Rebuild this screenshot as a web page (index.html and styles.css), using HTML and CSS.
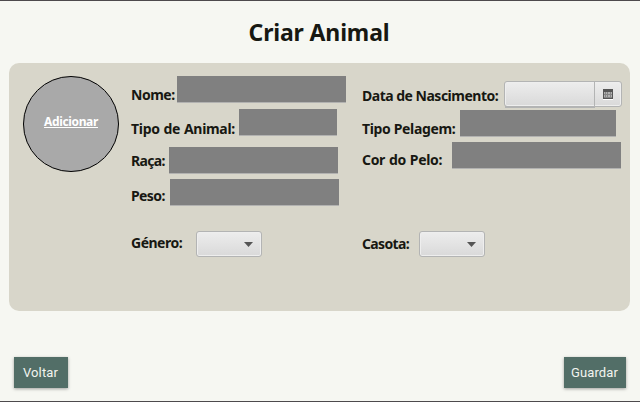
FILE: index.html
```html
<!DOCTYPE html>
<html lang="pt">
<head>
<meta charset="utf-8">
<title>Criar Animal</title>
<link rel="stylesheet" href="styles.css">
</head>
<body>
<h1 class="title"><span>Criar Animal</span></h1>
<main class="panel">
  <div class="photo"><a class="photo-link">Adicionar</a></div>
  <div class="column left">
    <div class="row nome"><label>Nome:</label><div class="field"></div></div>
    <div class="row tipo"><label>Tipo de Animal:</label><div class="field"></div></div>
    <div class="row raca"><label>Raça:</label><div class="field"></div></div>
    <div class="row peso"><label>Peso:</label><div class="field"></div></div>
    <div class="row genero"><label>Género:</label><div class="combo"><i class="arrow"></i></div></div>
  </div>
  <div class="column right">
    <div class="row data"><label>Data de Nascimento:</label>
      <div class="date"><div class="date-text"></div><div class="date-button">
        <svg width="10" height="11" viewBox="0 0 10 11" shape-rendering="crispEdges"><path fill="#fff" d="M0 10h10v1H0z"/><path fill="#555" d="M0 0h10v10H0z"/><path fill="#858585" d="M1 3h8v6H1z"/><path fill="#b0b0b0" d="M1 3h1v2H1zM3 3h1v2H3zM5 3h2v2H5zM8 3h1v2H8zM1 6h1v2H1zM3 6h1v2H3zM5 6h2v2H5zM8 6h1v2H8z"/></svg>
      </div></div>
    </div>
    <div class="row pelagem"><label>Tipo Pelagem:</label><div class="field"></div></div>
    <div class="row pelo"><label>Cor do Pelo:</label><div class="field"></div></div>
    <div class="row casota"><label>Casota:</label><div class="combo"><i class="arrow"></i></div></div>
  </div>
</main>
<footer class="actions">
  <button class="btn back"><span>Voltar</span></button>
  <button class="btn save"><span>Guardar</span></button>
</footer>
</body>
</html>
```
FILE: styles.css
```css
* { box-sizing: border-box; }
body {
  margin: 0;
  width: 640px;
  height: 402px;
  overflow: hidden;
  background: #f6f7f2;
  border-top: 1px solid #4d4a4d;
  border-bottom: 1px solid #4d4a4d;
  color: #171812;
  font-family: "Noto Sans", "Open Sans", sans-serif;
}
.title {
  margin: 0;
  height: 62px;
  padding-right: 2px;
  font-size: 23px;
  line-height: 63px;
  font-weight: 700;
  text-align: center;
  letter-spacing: -0.15px;
}
.panel {
  display: flex;
  width: 621px;
  height: 248px;
  margin-left: 9px;
  padding: 13px 0 0 14px;
  background: #d8d6ca;
  border-radius: 10px;
}
.photo {
  display: flex;
  justify-content: center;
  width: 96px;
  height: 96px;
  border: 1px solid #000;
  border-radius: 50%;
  background: #a9a9a9;
}
.photo-link {
  color: #fff;
  font-size: 12px;
  line-height: 20px;
  font-weight: 700;
  margin-top: 35px;
  letter-spacing: -0.35px;
  text-decoration: underline;
}
.left { width: 231px; margin-left: 12px; }
.right { padding-top: 5px; }
.row { display: flex; height: 26px; }
.row label {
  flex: none;
  font-size: 14px;
  line-height: 26px;
  font-weight: 700;
  white-space: nowrap;
  letter-spacing: -0.5px;
}
.field {
  width: 169px;
  height: 27px;
  background: #808080;
  border-bottom: 1px solid #b2b2b1;
}
.nome label { width: 46px; padding-top: 6px; }
.tipo { margin-top: 7px; }
.tipo label { width: 108px; padding-top: 7px; letter-spacing: -0.3px; word-spacing: 0.5px; }
.tipo .field { width: 98px; }
.raca { margin-top: 12px; }
.raca label { width: 38px; padding-top: 1px; letter-spacing: -0.65px; }
.peso { margin-top: 6px; }
.peso label { width: 39px; padding-top: 4px; letter-spacing: -0.6px; }
.genero { margin-top: 26px; }
.genero label { width: 65px; margin-top: -1px; }
.data label { width: 142px; padding-top: 2px; }
.pelagem { margin-top: 3px; }
.pelagem label { width: 98px; padding-top: 6px; letter-spacing: -0.35px; }
.pelagem .field { width: 156px; }
.pelo { margin-top: 6px; }
.pelo label { width: 90px; padding-top: 5px; letter-spacing: -0.35px; word-spacing: 0.7px; }
.casota { margin-top: 63px; }
.casota label { width: 57px; letter-spacing: -0.65px; }
.combo, .date {
  display: flex;
  height: 26px;
  border: 1px solid #b3b4b4;
  border-radius: 3px;
  background: linear-gradient(#ededed, #d9d9d9);
  box-shadow: inset 0 0 0 1px #eeeeee;
}
.combo {
  width: 66px;
  align-items: center;
  justify-content: flex-end;
  padding-right: 8px;
}
.arrow {
  width: 9px;
  height: 5px;
  margin-top: 1px;
  background: #555;
  clip-path: polygon(0 0, 100% 0, 50% 100%);
}
.date { width: 118px; }
.date-text {
  width: 90px;
  border-right: 1px solid #b3b4b4;
  box-shadow: 0 2px 0 #b3b4b4;
  clip-path: inset(0 0 -2px -1px);
}
.date-button {
  display: flex;
  flex: 1;
  align-items: center;
  justify-content: center;
}
.actions {
  display: flex;
  justify-content: space-between;
  padding: 46px 14px 0;
}
.btn {
  height: 31px;
  padding: 0;
  border: 0;
  background: #526e67;
  box-shadow: 0 1px 3px rgba(0, 0, 0, .35);
  color: #f2f4ef;
  font: 13px/31px Roboto, sans-serif;
  letter-spacing: 0.15px;
}
.back { width: 54px; }
.save { width: 62px; }
.btn span { margin-right: 1px; }
```
